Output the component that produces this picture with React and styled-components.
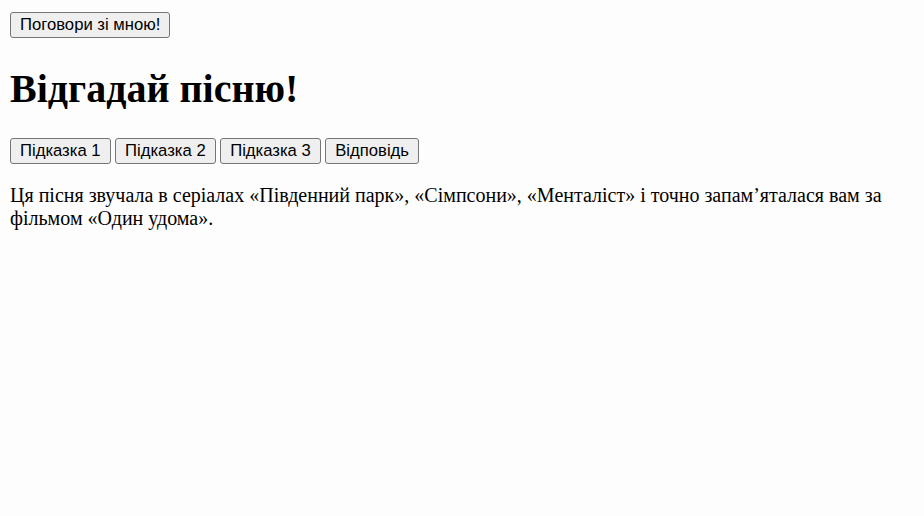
import React from "react";
import styled, { createGlobalStyle } from "styled-components";

const Global = createGlobalStyle`
  body {
    margin: 10px;
    font-family: "Liberation Serif", "Times New Roman", serif;
    font-size: 20px;
    background: #fdfdfd;
    color: #000;
  }
`;

const Button = styled.button`
  font-family: "Liberation Sans", Arial, sans-serif;
  font-size: 16.67px;
  color: #000;
  background: #efefef;
  border: 1px solid #767676;
  border-radius: 3px;
  padding: 2px 9px;
  line-height: normal;
  margin: 0;
`;

const TopBar = styled.div`
  display: flex;
  padding-top: 2px;
`;

const Title = styled.h1`
  font-size: 40px;
  font-weight: bold;
  margin: 26.8px 0 25.8px;
  line-height: normal;
`;

const Row = styled.div`
  display: flex;
  gap: 4.5px;
`;

const Text = styled.p`
  margin: 20px 0;
  line-height: normal;
`;

export default function App() {
  return (
    <>
      <Global />
      <TopBar>
        <Button>Поговори зі мною!</Button>
      </TopBar>
      <Title>Відгадай пісню!</Title>
      <Row>
        <Button>Підказка 1</Button>
        <Button>Підказка 2</Button>
        <Button>Підказка 3</Button>
        <Button>Відповідь</Button>
      </Row>
      <Text>
        Ця пісня звучала в серіалах «Південний парк», «Сімпсони», «Менталіст» і точно запам’яталася вам за фільмом «Один удома».
      </Text>
    </>
  );
}
